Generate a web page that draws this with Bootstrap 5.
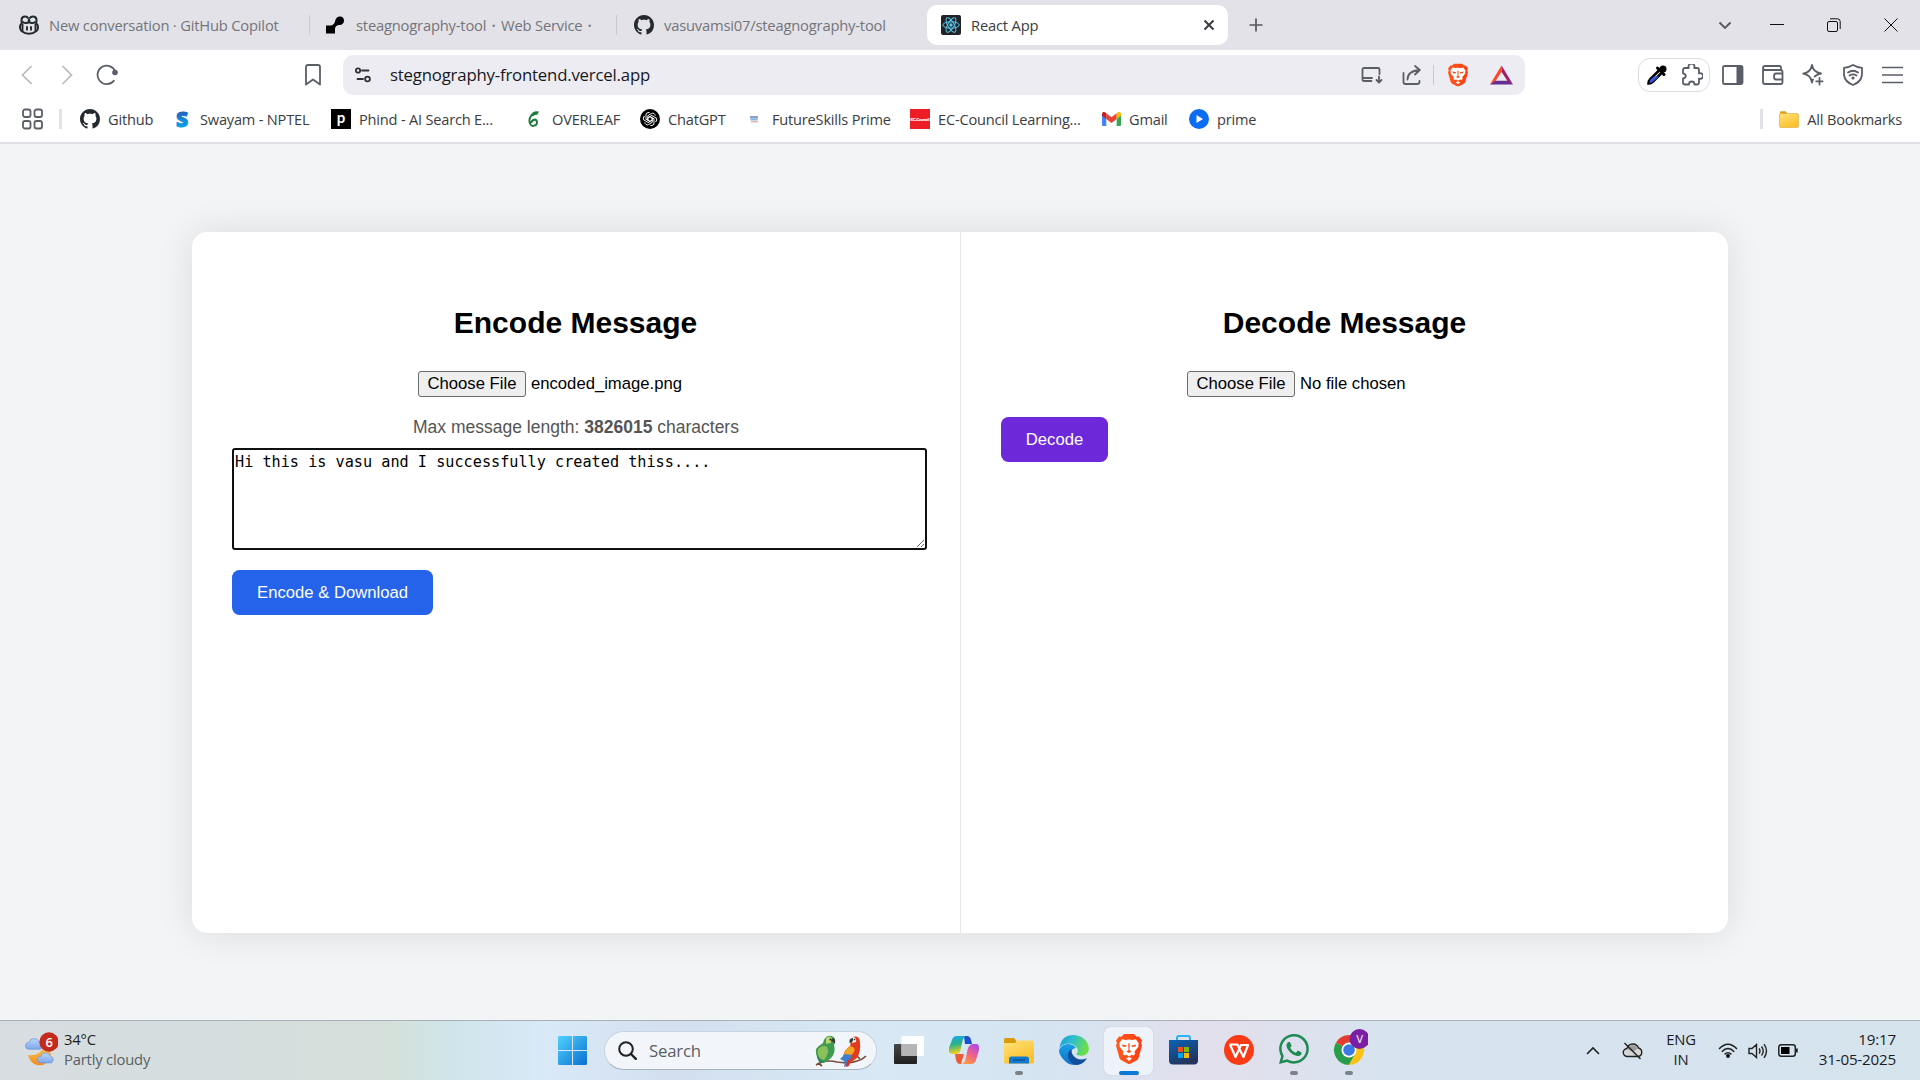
<!DOCTYPE html>
<html lang="en">
<head>
<meta charset="utf-8">
<title>React App</title>
<link href="https://cdn.jsdelivr.net/npm/bootstrap@5.3.0/dist/css/bootstrap.min.css" rel="stylesheet">
<style>
  body{width:1920px;height:1080px;overflow:hidden;background:#f3f4f6;font-family:"Open Sans","Noto Sans",sans-serif;font-size:14.6px;line-height:20px;color:#3b3d42;letter-spacing:-.2px}
  svg{display:block;flex:none}
  .ln{fill:none;stroke:#5a5e66;stroke-width:1.8;stroke-linecap:round;stroke-linejoin:round}
  .ibox{display:flex;align-items:center;justify-content:center;flex:none;width:40px}
  /* tab strip */
  .strip{height:50px;background:#e3e2e8;flex:none;padding-right:1px}
  .tb{height:40px;gap:10px;flex:none;color:#74757a;font-size:14.75px}
  .tb-1{width:309px;padding-left:19px}
  .tb-2{width:306px;padding-left:16px}
  .tb-3{width:310px;padding-left:17px}
  .tb-on{width:301px;padding:0 12px 0 14px;background:#fff;border-radius:10px;color:#3b3d42}
  .vsep{width:1px;height:20px;background:#c9c9d0;flex:none}
  .newtab{width:56px}
  .winbox{width:57px}
  .winmenu{width:46px}
  /* address row */
  .addr{height:50px;background:#fff;flex:none;padding-left:7px}
  .bmk{margin-left:166px}
  .urlbar{width:1182px;height:40px;margin-left:10px;padding-left:12px;background:#edecf2;border-radius:10px;color:#17181c;font-size:16.8px;letter-spacing:-.2px;flex:none}
  .urltxt{margin-left:19px}
  .urlsep{margin:0 4px 0 1px}
  .bat{margin:0 4px 0 3px}
  .ext{width:72px;height:34px;margin-left:113px;margin-right:3px;border:1px solid #dcdce2;border-radius:12px;flex:none}
  .ext .ibox{width:35px}
  /* bookmarks */
  .bms{height:44px;padding:0 18px 4px 22px;border-bottom:2px solid #dfe0e6;background:#fff;flex:none}
  .bi{display:flex;align-items:center;gap:8px;flex:none}
  .bsep{width:3px;height:20px;background:#e2e2e8;flex:none}
  .bsep-l{margin:0 18px 0 16px}
  .n1{width:92px}.n2{width:159px}.n3{width:193px}.n4{width:116px}.n5{width:104px}.n6{width:166px}.n7{width:192px}.n8{width:87px}
  /* app page */
  .page{flex:1 1 auto;padding:88px 192px 0}
  .panel{height:701px;background:#fff;border-radius:15px;box-shadow:0 0 37px rgba(0,0,0,.1);font-family:"Liberation Sans",Arial,sans-serif;letter-spacing:0;color:#000}
  .pane{width:767px;padding:72px 32px 0 40px}
  .pane-l{width:769px;border-right:1px solid #e5e7eb}
  .ttl{font-size:30px;line-height:38px;font-weight:700;margin:0;text-align:center;width:687px}
  .filebox{width:316px;height:26px;margin-top:29px;margin-left:186px;font-size:16.67px;gap:5px}
  .choose{height:26px;width:108px;border:1px solid #6b6b6b;border-radius:3px;background:#efefef;font-size:16.67px;line-height:22px;text-align:center;padding:0;color:#000}
  .maxlen{font-size:17.5px;line-height:22px;color:#555;margin:19px 0 0;text-align:center;width:688px}
  .msg{display:block;width:695px;height:102px;margin-top:10px;border:2px solid #101010;border-radius:3px;padding:2px 1px;outline:0;font:15.2px/21px "DejaVu Sans Mono",monospace;color:#000;resize:both}
  .act{border:0;border-radius:7.5px;height:45px;color:#fff;font-size:16.67px;line-height:20px;padding:0 24px;margin-top:20px;background:#2563eb;width:201px;white-space:nowrap}
  .act-v{background:#6d28d9;width:107px}
  /* taskbar */
  .task{height:60px;flex:none;border-top:1px solid #a9b0b9;color:#1b1c1e;font-size:14.8px;
    background:linear-gradient(90deg,#d8dde1 0,#d4dedf 10%,#d6dfdb 18%,#d5e0db 20.5%,#cfe5ea 23.5%,#d9e9f8 28.5%,#d3dfef 35%,#d8e9f5 46%,#d5e4f1 54%,#dbe2f0 58%,#e3dfec 63%,#d7e3ef 72%,#d6e4ee 100%)}
  .wx{width:558px;padding-left:24px;gap:6px}
  .wx2{color:#5a5e62}
  .up{padding-bottom:4px}
  .find{width:273px;height:39px;margin-left:17px;margin-right:4px;padding:0 9px 0 13px;border-radius:20px;background:#f2f6fb;border:1px solid #c9d3df;border-bottom-color:#a9b3c0;flex:none;font-size:16.8px;color:#5b5e63}
  .app{width:55px;height:48px;display:flex;flex-direction:column;align-items:center;justify-content:flex-end;gap:4px;flex:none}
  .app::after{content:"";width:8px;height:4px;border-radius:2px;background:transparent;flex:none}
  .app.lift{padding-bottom:3px}
  .app.run::after{background:#7c828a}
  .app.cur::after{background:#0b78d4;width:20px}
  .app.cur{width:49px;margin:0 3px;background:#eef2f9;border-radius:6px;box-shadow:0 0 1px #aab}
  .tray{margin-left:197px}
  .t30{width:30px}.t56{width:56px}.t4{margin-left:4px}
  .clock{margin-left:auto;padding-right:24px;text-align:right;font-size:15.2px}
</style>
</head>
<body class="d-flex flex-column">
<svg width="0" height="0" class="position-absolute">
  <defs>
    <linearGradient id="gBrave" x2="1"><stop stop-color="#ff5a1f"/><stop offset="1" stop-color="#fb3c12"/></linearGradient>
    <linearGradient id="gWin" x2="1" y2="1"><stop stop-color="#50d2ff"/><stop offset="1" stop-color="#0a6fd0"/></linearGradient>
    <linearGradient id="gS" x2="0" y2="1"><stop stop-color="#3a3f9e"/><stop offset=".6" stop-color="#0d8fe0"/><stop offset="1" stop-color="#0ab0e8"/></linearGradient>
    <linearGradient id="gFold" x2=".6" y2="1"><stop stop-color="#ffe27a"/><stop offset="1" stop-color="#fcc02c"/></linearGradient>
    <linearGradient id="gCloud" x2="0" y2="1"><stop stop-color="#bcd6fb"/><stop offset="1" stop-color="#7ea6ea"/></linearGradient>
    <linearGradient id="gMoon" x2="0" y2="1"><stop stop-color="#f7c65a"/><stop offset="1" stop-color="#f28c1c"/></linearGradient>
    <symbol id="gh" viewBox="0 0 16 16"><path fill="#24292f" d="M8 0C3.58 0 0 3.58 0 8c0 3.54 2.29 6.53 5.47 7.59.4.07.55-.17.55-.38 0-.19-.01-.82-.01-1.49-2.01.37-2.53-.49-2.69-.94-.09-.23-.48-.94-.82-1.13-.28-.15-.68-.52-.01-.53.63-.01 1.08.58 1.23.82.72 1.21 1.87.87 2.33.66.07-.52.28-.87.51-1.07-1.78-.2-3.64-.89-3.64-3.95 0-.87.31-1.59.82-2.15-.08-.2-.36-1.02.08-2.12 0 0 .67-.21 2.2.82.64-.18 1.32-.27 2-.27.68 0 1.36.09 2 .27 1.53-1.04 2.2-.82 2.2-.82.44 1.1.16 1.92.08 2.12.51.56.82 1.27.82 2.15 0 3.07-1.87 3.75-3.65 3.95.29.25.54.73.54 1.48 0 1.07-.01 1.93-.01 2.2 0 .21.15.46.55.38A8.01 8.01 0 0 0 16 8c0-4.42-3.58-8-8-8Z"/></symbol>
    <symbol id="brave" viewBox="0 0 26 30"><path fill="url(#gBrave)" d="M8 0h10l2.6 2.8 2.4-.3L26 6.4 25 9l1 2.6-3.4 12.2q-.5 1.6-2 2.6L13 30.3l-7.6-4q-1.500-1-2-2.500L0 11.600 1 9 0 6.400l3-3.900 2.400.3z"/><path fill="#fff" d="M13 5.600l3.200.4 3.700-.7 3 4.200-.6 1.500.3 1.600-4.200 5.200.8 2.100-2 1.600-1.700-.7-2.500 1.600-2.500-1.600-1.700.7-2-1.600.8-2.100-4.200-5.200.3-1.600-.6-1.500 3-4.200 3.700.7zM13 23l3 1.500-3 2.500-3-2.500z"/><path fill="#fb4a17" d="M5.800 10.600l4.700.8-.4 1.700-3.500-.5zM20.200 10.600l-4.700.8.4 1.700 3.500-.5zM12.200 9.500h1.600l-.3 6.500 2 1.500L13 19l-2.500-1.500 2-1.500z"/></symbol>
    <symbol id="cl" viewBox="0 0 20 13"><path fill="url(#gCloud)" stroke="#6a93da" stroke-width=".7" d="M4 12.500a3.600 3.600 0 0 1 .2-7.200A5.500 5.500 0 0 1 14.700 5a4 4 0 0 1 1.300 7.500z"/></symbol>
  </defs>
</svg>

<!-- Tab strip -->
<div class="strip d-flex align-items-center">
  <div class="tb tb-1 d-flex align-items-center">
    <svg width="20" height="20" viewBox="0 0 20 20"><path d="M3 8.500Q1.500 3 4.500 1.800T9.600 3.500M17 8.500Q18.500 3 15.500 1.800T10.400 3.500" fill="none" stroke="#24292f" stroke-width="2"/><path d="M3.300 6.500Q5 9 9.300 7.500L10 4.500l.7 3Q15 9 16.700 6.500M3 8q-2.300 2-2 4.500T2.500 16q3.500 2.800 7.500 2.800t7.500-2.800q1.500-1 1.500-3.500T17 8" fill="none" stroke="#24292f" stroke-width="2" stroke-linejoin="round"/><path d="M3.500 9.500v5.700M16.500 9.500v5.700M8 12v2.800M12 12v2.800" stroke="#24292f" stroke-width="1.900" stroke-linecap="round"/></svg>
    <span class="text-nowrap">New conversation · GitHub Copilot</span>
  </div>
  <div class="vsep"></div>
  <div class="tb tb-2 d-flex align-items-center">
    <svg width="20" height="20" viewBox="0 0 20 20"><path d="M0 18.500v-8h4.500Q8 10.200 9 6.500 10 1.500 14 1.500q4 .3 4 4.200-.3 4-4.500 4.300-4 .2-4.500 3.500v5z"/></svg>
    <span class="text-nowrap">steagnography-tool・Web Service・</span>
  </div>
  <div class="vsep"></div>
  <div class="tb tb-3 d-flex align-items-center">
    <svg width="20" height="20"><use href="#gh"/></svg>
    <span class="text-nowrap">vasuvamsi07/steagnography-tool</span>
  </div>
  <div class="tb tb-on d-flex align-items-center">
    <svg width="20" height="20" viewBox="0 0 20 20"><rect width="20" height="20" rx="2" fill="#20232a"/><g fill="none" stroke="#5ac8e8" stroke-width="1"><ellipse cx="10" cy="10" rx="8.200" ry="3.200"/><ellipse cx="10" cy="10" rx="8.200" ry="3.200" transform="rotate(60 10 10)"/><ellipse cx="10" cy="10" rx="8.200" ry="3.200" transform="rotate(120 10 10)"/></g><circle cx="10" cy="10" r="1.700" fill="#5ac8e8"/></svg>
    <span>React App</span>
    <svg class="ms-auto" width="14" height="14" viewBox="0 0 14 14"><path d="M2.500 2.500l9 9M11.500 2.500l-9 9" stroke="#3b3d42" stroke-width="2"/></svg>
  </div>
  <div class="ibox newtab"><svg width="14" height="14" viewBox="0 0 14 14"><path d="M7 .5v13M.5 7h13" stroke="#55565c" stroke-width="1.700"/></svg></div>
  <div class="ibox winmenu ms-auto"><svg width="14" height="14" viewBox="0 0 14 14"><path d="M1.500 4.500L7 10l5.500-5.500" fill="none" stroke="#55585e" stroke-width="1.900"/></svg></div>
  <div class="ibox winbox"><svg width="14" height="14"><path d="M0 6.500h14" stroke="#111"/></svg></div>
  <div class="ibox winbox"><svg width="14" height="14" viewBox="0 0 14 14"><rect x=".5" y="3.500" width="10" height="10" rx="1.500" fill="none" stroke="#111"/><path d="M3 .8h7.500q2.700 0 2.700 2.700V11" fill="none" stroke="#111"/></svg></div>
  <div class="ibox winbox"><svg width="14" height="14"><path d="M.5.5l13 13M13.500.5l-13 13" stroke="#111"/></svg></div>
</div>

<!-- Address row -->
<div class="addr d-flex align-items-center">
  <div class="ibox"><svg width="12" height="20" viewBox="0 0 12 20"><path d="M10.500 1L1.500 10l9 9" fill="none" stroke="#b9babf" stroke-width="1.700"/></svg></div>
  <div class="ibox"><svg width="12" height="20" viewBox="0 0 12 20"><path d="M1.500 1l9 9-9 9" fill="none" stroke="#b9babf" stroke-width="1.700"/></svg></div>
  <div class="ibox"><svg width="22" height="22" viewBox="0 0 22 22"><path d="M17.800 16.800A9.200 9.200 0 1 1 19.500 8" class="ln"/><circle cx="19" cy="8.500" r="2.800" fill="#5a5e66"/></svg></div>
  <div class="ibox bmk"><svg width="16" height="22" viewBox="0 0 16 22"><path class="ln" d="M3 1h10q2 0 2 2v17.500l-7-5-7 5V3q0-2 2-2z"/></svg></div>
  <div class="urlbar d-flex align-items-center">
    <svg width="16" height="16" viewBox="0 0 16 16" fill="none" stroke="#303136" stroke-width="1.800"><circle cx="3" cy="3.500" r="2.200"/><path d="M7 3.500h6.500M2.500 12H8" stroke-linecap="round"/><circle cx="12.500" cy="12" r="2.400"/></svg>
    <span class="urltxt">stegnography-frontend.vercel.app</span>
    <div class="ibox ms-auto"><svg width="22" height="18" viewBox="0 0 22 18"><path class="ln" d="M10.500 15H3q-1.500 0-1.500-1.500v-10Q1.500 2 3 2h14q1.500 0 1.500 1.500V8M1.500 12H11M18 10.500v5.500M15.500 14l2.500 2.500 2.500-2.500"/></svg></div>
    <div class="ibox"><svg width="20" height="20" viewBox="0 0 20 20"><path class="ln" d="M1.500 8v9q0 2 2 2H15q2.500 0 2.500-2v-1M5.500 14.500Q5.500 6 17.500 5M13 1l4.800 4L13 9.500"/></svg></div>
    <div class="vsep urlsep"></div>
    <div class="ibox"><svg width="20" height="24" viewBox="0 0 26 30"><use href="#brave"/></svg></div>
    <div class="ibox bat"><svg width="23" height="20" viewBox="0 0 24 20"><path fill="#ff4724" d="M12 0v6.500L5.600 16.500 0 20z"/><path fill="#9e1f63" d="M12 0l12 20-5.600-3.500L12 6.500z"/><path fill="#662d91" d="M0 20l5.600-4h12.800l5.600 4z"/></svg></div>
  </div>
  <div class="ext d-flex align-items-center">
    <div class="ibox"><svg width="20" height="20" viewBox="0 0 20 20"><path d="M12 5.500L3 14.500q-1.500 1-1.500 4 3 0 4-1.500l9-9" fill="#fff" stroke="#000" stroke-width="2.600"/><path d="M7 11.500h5L5.500 17l-3 1 .5-3z" fill="#3d57d8"/><path d="M10.500 3l6.500 6.500M12.500 6.500L16 3q2-1.500 0 1.500z" stroke="#000" stroke-width="3" stroke-linecap="round"/><circle cx="16" cy="4" r="3.500"/></svg></div>
    <div class="ibox"><svg width="22" height="22" viewBox="0 0 22 22"><path class="ln" d="M2 6q0-2 2-2h3.800a3 3 0 1 1 5.400 0H16q2 0 2 2v3.500a2.800 2.800 0 1 1 0 5V18q0 2.500-2 2.500h-2.500q0-3-2.800-3t-2.800 3H4q-2 0-2-2V14.500q2.800-.3 2.800-2.500T2 9.300z"/></svg></div>
  </div>
  <div class="ibox"><svg width="22" height="20" viewBox="0 0 22 20"><rect class="ln" x="1" y="1" width="19.500" height="18" rx="1.500"/><path d="M14.500 1H20q1 0 1 1v16q0 1-1 1h-5.500z" fill="#5a5e66"/></svg></div>
  <div class="ibox"><svg width="22" height="20" viewBox="0 0 22 20"><path class="ln" d="M1 4.500V17q0 2 2 2h15.500q2 0 2-2v-2M20.500 8V7q0-2-2-2H3Q1 5 1 3t2-2h14.500q1.500 0 1.500 1.500V5M20.500 8.500H14q-2 0-2 3t2 3h6.500z"/></svg></div>
  <div class="ibox"><svg width="22" height="22" viewBox="0 0 22 22"><path class="ln" d="M10 1q1.300 7.200 9 8.500-4 .8-6.300 3M10 1Q8.700 8.300 1.200 9.700 8.700 11 10 18.500q.3-1.800 1-3M17.500 14v6.500M14.200 17.300h6.500"/></svg></div>
  <div class="ibox"><svg width="20" height="22" viewBox="0 0 20 22"><path class="ln" d="M10 1q4 2.500 9 2.800V11q-1 7-9 10Q2 18 1 11V3.800Q6 3.500 10 1z"/><path class="ln" stroke-width="1.500" d="M5 8.500q5-3.500 10 0M6.500 11.500q3.500-2.300 7 0"/><circle cx="10" cy="14" r="1.600" fill="#5a5e66"/></svg></div>
  <div class="ibox"><svg width="22" height="18" viewBox="0 0 22 18"><path d="M0 1.500h21M0 9h21M0 16.500h21" stroke="#5a5e66" stroke-width="1.700"/></svg></div>
</div>

<!-- Bookmarks -->
<div class="bms d-flex align-items-center">
  <svg width="21" height="22" viewBox="0 0 21 22" class="ln"><rect x="1" y="1.500" width="7.500" height="7.500" rx="2"/><rect x="12.500" y="1.500" width="7.500" height="7.500" rx="2"/><rect x="1" y="13" width="7.500" height="7.500" rx="2"/><rect x="12.500" y="13" width="7.500" height="7.500" rx="2"/></svg>
  <div class="bsep bsep-l"></div>
  <div class="bi n1"><svg width="20" height="20"><use href="#gh"/></svg><span>Github</span></div>
  <div class="bi n2"><svg width="20" height="30" viewBox="0 0 20 30"><text x="10" y="22.500" text-anchor="middle" font-family="Open Sans,sans-serif" font-weight="800" font-size="21" letter-spacing="0" fill="url(#gS)" stroke="url(#gS)" stroke-width="1">S</text></svg><span class="text-nowrap">Swayam - NPTEL</span></div>
  <div class="bi n3"><svg width="20" height="20"><rect width="20" height="20"/><text x="10" y="13.500" text-anchor="middle" font-family="Lato,sans-serif" font-weight="700" font-size="15" fill="#fff">p</text></svg><span class="text-nowrap">Phind - AI Search E...</span></div>
  <div class="bi n4"><svg width="20" height="20" viewBox="0 0 20 20"><path d="M14.500 3.500Q10 2 7 7 4.500 11 6 14.500t4.500 2q2.500-.5 2.500-3T11 10.500Q8 11 7 14M8.500 6.500q2.500-2 5-1.500" fill="none" stroke="#1b7a3a" stroke-width="1.900"/></svg><span>OVERLEAF</span></div>
  <div class="bi n5"><svg width="20" height="20" viewBox="0 0 20 20"><circle cx="10" cy="10" r="10"/><g fill="none" stroke="#fff" stroke-width=".95"><path id="k1" d="M10 7.600l2.200 1.200v4.500l-3.700 2.200a2.400 2.400 0 0 1-3.600-2.200"/><use href="#k1" transform="rotate(60 10 10)"/><use href="#k1" transform="rotate(120 10 10)"/><use href="#k1" transform="rotate(180 10 10)"/><use href="#k1" transform="rotate(240 10 10)"/><use href="#k1" transform="rotate(300 10 10)"/></g></svg><span>ChatGPT</span></div>
  <div class="bi n6"><svg width="20" height="20" viewBox="0 0 20 20"><path d="M6 7h8v2.500H6z" fill="#8f9cc4"/><path d="M6.500 9.500h7v2h-7z" fill="#7fb7e6"/><path d="M7 12h7v1.500H7z" fill="#f3b3a6"/></svg><span class="text-nowrap">FutureSkills Prime</span></div>
  <div class="bi n7"><svg width="20" height="20"><rect width="20" height="20" fill="#ee1c25"/><text x="10" y="11.500" text-anchor="middle" font-family="Liberation Sans,sans-serif" font-weight="700" font-size="3.500" fill="#fff" stroke="#fff" stroke-width=".2" letter-spacing="0">EC-Council</text></svg><span class="text-nowrap">EC-Council Learning...</span></div>
  <div class="bi n8"><svg width="19" height="14" viewBox="0 0 19 14"><path fill="#4285f4" d="M0 2v11q0 1 1 1h3.300V5z"/><path fill="#34a853" d="M19 2v11q0 1-1 1h-3.300V5z"/><path fill="#ea4335" d="M4.300 1.300l5.200 4 5.200-4V7l-5.200 4-5.200-4z"/><path fill="#c5221f" d="M0 2Q.4-1 3 .3l1.300 1V7L0 3.700z"/><path fill="#fbbc04" d="M19 2q-.4-3-3-1.700l-1.300 1V7L19 3.700z"/></svg><span>Gmail</span></div>
  <div class="bi"><svg width="20" height="20"><circle cx="10" cy="10" r="10" fill="#0a6cf5"/><path d="M7.500 6v8l6.500-4z" fill="#fff"/></svg><span>prime</span></div>
  <div class="bsep ms-auto me-3"></div>
  <div class="bi"><svg width="20" height="17" viewBox="0 0 20 17"><path fill="#e0a21b" d="M1 5V1.500Q1 .3 2 .3h4.500L8.500 2.500V5z"/><rect x=".5" y="2.500" width="19" height="14" rx="1.500" fill="url(#gFold)" stroke="#d9a83a" stroke-width=".6"/></svg><span class="text-nowrap">All Bookmarks</span></div>
</div>

<!-- Steganography app -->
<main class="page">
  <div class="panel d-flex">
    <section class="pane pane-l">
      <h2 class="ttl">Encode Message</h2>
      <div class="filebox d-flex align-items-center"><button class="choose">Choose File</button><span>encoded_image.png</span></div>
      <p class="maxlen">Max message length: <b>3826015</b> characters</p>
      <textarea class="msg" spellcheck="false">Hi this is vasu and I successfully created thiss....</textarea>
      <button class="act">Encode &amp; Download</button>
    </section>
    <section class="pane">
      <h2 class="ttl">Decode Message</h2>
      <div class="filebox d-flex align-items-center"><button class="choose">Choose File</button><span>No file chosen</span></div>
      <button class="act act-v">Decode</button>
    </section>
  </div>
</main>

<!-- Taskbar -->
<footer class="task d-flex align-items-center">
  <div class="wx d-flex align-items-center flex-shrink-0">
    <svg width="34" height="38" viewBox="0 0 34 38"><path d="M4 23q7 1 12-3 4-3 5-6 8 5 5 12-5 9-13 7Q6 31 4 23z" fill="url(#gMoon)"/><use href="#cl" x="1" y="5" width="19" height="13"/><use href="#cl" x="13" y="19" width="18" height="13"/><circle cx="25" cy="7.500" r="0"/><circle cx="25" cy="10" r="9.700" fill="#c42b1c"/><text x="25" y="14.800" text-anchor="middle" fill="#fff" font-weight="600" font-size="13">6</text></svg>
    <div class="up"><div>34°C</div><div class="wx2">Partly cloudy</div></div>
  </div>
  <svg width="29" height="29" viewBox="0 0 29 29" fill="url(#gWin)"><path d="M1.500 0H14v14H0V1.500Q0 0 1.500 0zM15 0h12.500Q29 0 29 1.500V14H15zM0 15h14v14H1.500Q0 29 0 27.500zM15 15h14v12.500q0 1.500-1.500 1.500H15z"/></svg>
  <div class="find d-flex align-items-center">
    <svg width="19" height="19" viewBox="0 0 19 19"><circle cx="8" cy="8" r="6.800" fill="none" stroke="#222" stroke-width="2"/><path d="M13 13l4.800 4.800" stroke="#222" stroke-width="2.400" stroke-linecap="round"/></svg>
    <span class="ms-2 ps-1">Search</span>
    <svg class="ms-auto" width="52" height="32" viewBox="0 0 52 32">
      <path d="M1 30Q10 24 22 27q12 2 20-1 5-1 9-5M45 24l-3-3M3 28l4 3" fill="none" stroke="#7a4b35" stroke-width="1.700"/>
      <path d="M11 2q5-3 8.500 1 1.500 3-.5 7 2 8-3 13l-5 4-5 1Q0 22 1 14q2-3 7-6 1-4 3-6z" fill="#3f9a52"/><path d="M3 14q5-5 9-2 3 6-3 13Q1 23 3 14z" fill="#8cc15a"/><path d="M11 3q3-3 6 0l-1 5-5 1z" fill="#b5d66b"/><path d="M17 3.500q4-.5 3 5-2-2-4-2z" fill="#3c3a3a"/><circle cx="15.500" cy="4.500" r="1" fill="#222"/><path d="M2 20q2 6 8 7l-4 1Q2 26 2 20z" fill="#2a7b6c"/>
      <path d="M38 2q6-2 7 5 1 10-3 16l-7 5-7-6q1-7 7-11z" fill="#e23a1e"/><path d="M35 11q6 1 4 6l-6 7-5 1q0-9 7-14z" fill="#f4a622"/><path d="M30 19l7 1-3 10-5 2q1-4 0-6l-4-2z" fill="#3d80c9"/><path d="M37 2q5 0 4 5l-4 1z" fill="#f6e9de"/><path d="M38 3q-5 0-3 6 1-2 3-3z" fill="#3c3a3a"/><circle cx="39.500" cy="4.500" r=".8" fill="#222"/><path d="M36 23l-2 8-3 1 1-6z" fill="#d8332a"/>
    </svg>
  </div>
  <div class="app lift"><svg width="30" height="28" viewBox="0 0 30 28"><defs><linearGradient id="gD" x2="0" y2="1"><stop stop-color="#474747"/><stop offset="1" stop-color="#1f1f1f"/></linearGradient></defs><rect y="8" width="23" height="20" rx="1" fill="url(#gD)"/><rect x="7.500" width="22.500" height="20" rx="1" fill="#fff" opacity=".93"/><path d="M7.500 8H23v12H7.500z" fill="#b5b5b5"/></svg></div>
  <div class="app lift"><svg width="30" height="28" viewBox="0 0 30 28"><defs><linearGradient id="c1" x2=".2" y2="1"><stop stop-color="#1da5ee"/><stop offset=".5" stop-color="#25b18b"/><stop offset="1" stop-color="#f2d21b"/></linearGradient><linearGradient id="c2" x1=".8" x2=".3" y2="1"><stop stop-color="#a74be8"/><stop offset=".5" stop-color="#ee5f8d"/><stop offset="1" stop-color="#fb9a45"/></linearGradient></defs><path d="M15 0h3q3 0 4 4l1 4h-7z" fill="#1a4fd0"/><path d="M12 28h-1q-3 0-4-4l-1-6h9z" fill="#ee5a36"/><path d="M8 0h9q-2.500 1-3.500 5l-2 9q-1 4-5 4H3q-4 0-3-6L3 4q1-4 5-4z" fill="url(#c1)"/><path d="M22 28h-9q2.500-1 3.500-5l2-9q1-5 5-6H27q4 0 3 6l-3 10q-1 4-5 4z" fill="url(#c2)"/></svg></div>
  <div class="app run"><svg width="30" height="31" viewBox="0 0 30 31"><path d="M0 11V3.500Q0 2 1.500 2H10l3 3.500V11z" fill="#d99a0c"/><path d="M0 7h11l2-2.500h15.500Q30 4.500 30 6v20q0 1.500-1.500 1.500h-27Q0 27.500 0 26z" fill="url(#gFold)"/><path d="M5 27.500V23q0-2.500 2.500-2.500h15Q25 20.500 25 23v4.500z" fill="#1478cb"/><path d="M9 24h12" stroke="#0c4e94" stroke-width="1.200"/></svg></div>
  <div class="app"><svg width="30" height="32" viewBox="0 0 30 32"><defs><linearGradient id="e1" x2="1" y2=".3"><stop stop-color="#1b9de2"/><stop offset=".5" stop-color="#2fc0c8"/><stop offset="1" stop-color="#6bde49"/></linearGradient><linearGradient id="e2" x2="0" y2="1"><stop stop-color="#1aa0e6"/><stop offset="1" stop-color="#1272c9"/></linearGradient></defs><path d="M.5 13Q2 0 15 0q9 .5 13.500 8 4 10-4 12.500-6 1-7.500-1.500 3-2 1-6Q14 7 6 9 2 10 .5 13z" fill="url(#e1)"/><path d="M0 15Q3 8.500 10 9q5 .5 7 4-6 1-5 7 1 6 8 9-9 3-15-4Q0 20 0 15z" fill="url(#e2)"/><path d="M12.500 14Q8 17 9 22q2 7 9 8 7-1 10-7-6 3-11 0-5-3-4.500-9z" fill="#0f4f9e"/></svg></div>
  <div class="app cur"><svg width="26" height="33" viewBox="0 0 26 33"><use href="#brave" width="26" height="30"/></svg></div>
  <div class="app"><svg width="30" height="33" viewBox="0 0 30 33"><defs><linearGradient id="st" x2=".5" y2="1"><stop stop-color="#0b63b8"/><stop offset="1" stop-color="#22345c"/></linearGradient></defs><path d="M8 8V4q0-2 2-2h9q2 0 2 2v4" fill="none" stroke="#28b4ee" stroke-width="2"/><path d="M0 6h29v20.500q0 4-4 4H4q-4 0-4-4z" fill="url(#st)"/><path fill="#f25022" d="M9 13h5v5H9z"/><path fill="#7fba00" d="M15 13h5v5h-5z"/><path fill="#00a4ef" d="M9 19h5v5H9z"/><path fill="#ffb900" d="M15 19h5v5h-5z"/></svg></div>
  <div class="app"><svg width="30" height="32" viewBox="0 0 30 32"><circle cx="15" cy="15" r="15" fill="#f93a17"/><path d="M5.500 9.500h8l2.500 6M6 9.500l5.500 12.500L17 10h7l-4.500 12-5-10" fill="none" stroke="#fff" stroke-width="2.200" stroke-linejoin="round"/></svg></div>
  <div class="app run"><svg width="30" height="33" viewBox="0 0 16 17.600"><path fill="#1f8a53" d="M13.601 2.326A7.854 7.854 0 0 0 7.994 0C3.627 0 .068 3.558.064 7.926c0 1.399.366 2.760 1.057 3.965L0 16l4.204-1.102a7.933 7.933 0 0 0 3.790.965h.004c4.368 0 7.926-3.558 7.930-7.930A7.898 7.898 0 0 0 13.600 2.326zM7.994 14.521a6.573 6.573 0 0 1-3.356-.920l-.240-.144-2.494.654.666-2.433-.156-.251a6.560 6.560 0 0 1-1.007-3.505c0-3.626 2.957-6.584 6.591-6.584a6.560 6.560 0 0 1 4.660 1.931 6.557 6.557 0 0 1 1.928 4.660c-.004 3.639-2.961 6.592-6.592 6.592zm3.615-4.934c-.197-.099-1.170-.578-1.353-.646-.182-.065-.315-.099-.445.099-.133.197-.513.646-.627.775-.114.133-.232.148-.430.050-.197-.100-.836-.308-1.592-.985-.590-.525-.985-1.175-1.103-1.372-.114-.198-.011-.304.088-.403.087-.088.197-.232.296-.346.100-.114.133-.198.198-.330.065-.134.034-.248-.015-.347-.050-.099-.445-1.076-.612-1.470-.160-.389-.323-.335-.445-.340-.114-.007-.247-.007-.380-.007a.729.729 0 0 0-.529.247c-.182.198-.691.677-.691 1.654 0 .977.710 1.916.810 2.049.098.133 1.394 2.132 3.383 2.992.470.205.840.326 1.129.418.475.152.904.129 1.246.080.380-.058 1.171-.480 1.338-.943.164-.464.164-.860.114-.943-.049-.084-.182-.133-.380-.232z"/></svg></div>
  <div class="app run"><svg width="38" height="38" viewBox="-4 -6 38 38"><circle cx="15" cy="15" r="15" fill="#fff"/><path d="M15 15L2 7.500A15 15 0 0 1 28 7.500z" fill="#e33b2e"/><path d="M2 7.500A15 15 0 0 0 15 30l7-12-7-3z" fill="#2a9d4c"/><path d="M28 7.500A15 15 0 0 1 15 30l6.500-11.500L15 7.500z" fill="#fbc116"/><circle cx="15" cy="15" r="7.500" fill="#fff"/><circle cx="15" cy="15" r="5.800" fill="#3b78e7"/><circle cx="25.500" cy="4" r="10" fill="#7b1fa2"/><text x="25.500" y="8" text-anchor="middle" fill="#e6d3ee" font-size="11" font-weight="600">V</text></svg></div>
  <div class="tray d-flex align-items-center flex-grow-1">
    <div class="ibox"><svg width="14" height="9" viewBox="0 0 14 9"><path d="M1 8l6-6 6 6" fill="none" stroke="#222" stroke-width="1.600"/></svg></div>
    <div class="ibox"><svg width="22" height="18" viewBox="0 0 22 18"><path d="M5.500 14.500a4 4 0 0 1-.5-8A6 6 0 0 1 16.500 6a4.400 4.400 0 0 1 0 8.500z" fill="#d6d6d6" stroke="#222" stroke-width="1.400"/><path d="M5.500 7a5.500 5.500 0 0 1 10.300-.5L11 10z" fill="#9b9b9b"/><path d="M2.500 1l16 16" stroke="#222" stroke-width="1.500"/></svg></div>
    <div class="t56 text-center flex-shrink-0 up">ENG<br>IN</div>
    <div class="ibox t30 t4"><svg width="20" height="15" viewBox="0 0 20 15"><path d="M1 6q9-9.500 18 0M3.800 8.700q6.200-6.400 12.400 0M6.600 11.400q3.400-3.400 6.800 0" fill="none" stroke="#222" stroke-width="1.500"/><circle cx="10" cy="13" r="1.900"/></svg></div>
    <div class="ibox t30"><svg width="20" height="16" viewBox="0 0 20 16"><path d="M1 5.500h3L8.500 1.500v13L4 10.500H1zM11 5.500q2 2.500 0 5M13.500 3.500q3.500 4.500 0 9M16 1.200q5 6.800 0 13.600" fill="none" stroke="#222" stroke-width="1.400"/></svg></div>
    <div class="ibox t30"><svg width="21" height="13" viewBox="0 0 21 13"><rect x=".8" y=".8" width="16.500" height="11.400" rx="2.500" fill="none" stroke="#222" stroke-width="1.500"/><rect x="3" y="3" width="8.500" height="7"/><path d="M18.500 4.500v4" stroke="#222" stroke-width="2.500"/></svg></div>
    <div class="clock up">19:17<br>31-05-2025</div>
  </div>
</footer>
<script src="https://cdn.jsdelivr.net/npm/bootstrap@5.3.0/dist/js/bootstrap.bundle.min.js"></script>
</body>
</html>
